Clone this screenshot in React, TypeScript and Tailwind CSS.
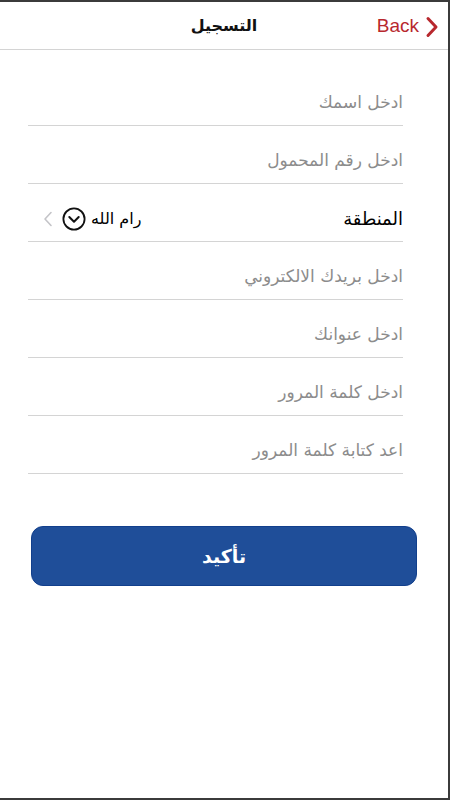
const fields = [
  "ادخل اسمك",
  "ادخل رقم المحمول",
  null,
  "ادخل بريدك الالكتروني",
  "ادخل عنوانك",
  "ادخل كلمة المرور",
  "اعد كتابة كلمة المرور",
];

const arabic = { fontFamily: '"DejaVu Sans", "Noto Sans", sans-serif' };

function BackChevron() {
  return (
    <svg width="14" height="22" viewBox="0 0 14 22" fill="none">
      <path d="M3 2.5L11 11L3 19.5" stroke="#b8282e" strokeWidth="3" strokeLinecap="round" strokeLinejoin="round" />
    </svg>
  );
}

function CircleDown() {
  return (
    <svg width="24" height="24" viewBox="0 0 24 24" fill="none">
      <circle cx="12" cy="12" r="10.6" stroke="#111" strokeWidth="1.8" />
      <path d="M7.3 10L12 14.7L16.7 10" stroke="#111" strokeWidth="2" strokeLinecap="round" strokeLinejoin="round" />
    </svg>
  );
}

function GrayChevron() {
  return (
    <svg width="10" height="16" viewBox="0 0 10 16" fill="none">
      <path d="M8 1.5L2 8L8 14.5" stroke="#c4c4c8" strokeWidth="1.6" strokeLinecap="round" strokeLinejoin="round" />
    </svg>
  );
}

export default function App() {
  return (
    <div className="h-[800px] w-[450px] overflow-hidden border-y-2 border-r-2 border-[#3b3b3b] bg-white">
      <header className="grid h-[48px] grid-cols-[1fr_auto_1fr] items-center border-b border-[#d4d4d4]">
        <div />
        <h1 className="pt-[1px] text-[16px] font-semibold text-[#111]" style={arabic}>
          التسجيل
        </h1>
        <div className="flex items-center justify-end gap-[6px] pt-[2px] pr-[9px]">
          <span className="text-[19px] text-[#b8282e]" style={{ fontFamily: '"Liberation Sans", Arial, sans-serif' }}>
            Back
          </span>
          <BackChevron />
        </div>
      </header>

      <div className="pt-[18px] pl-[28px] pr-[45px]" dir="rtl" style={arabic}>
        {fields.map((label, i) =>
          label ? (
            <div key={i} className="flex h-[58px] items-center border-b border-[#d4d4d4] pt-[12px]">
              <span className="text-[17px] text-[#8c8c8c]">{label}</span>
            </div>
          ) : (
            <div key={i} className="flex h-[58px] items-center justify-between border-b border-[#d4d4d4] pt-[12px]">
              <span className="text-[18px] text-black">المنطقة</span>
              <div className="flex items-center gap-[5px] pl-[15px]">
                <span className="text-[16px] text-black">رام الله</span>
                <div className="flex items-center gap-[9px]">
                  <CircleDown />
                  <GrayChevron />
                </div>
              </div>
            </div>
          )
        )}
      </div>

      <div className="pt-[52px] pl-[31px] pr-[31px]">
        <button
          className="flex h-[60px] w-full items-center justify-center rounded-[12px] border border-[#123f8c] bg-[#1f4e99] text-[19px] font-bold text-white"
          style={arabic}
          dir="rtl"
        >
          تأكيد
        </button>
      </div>
    </div>
  );
}
